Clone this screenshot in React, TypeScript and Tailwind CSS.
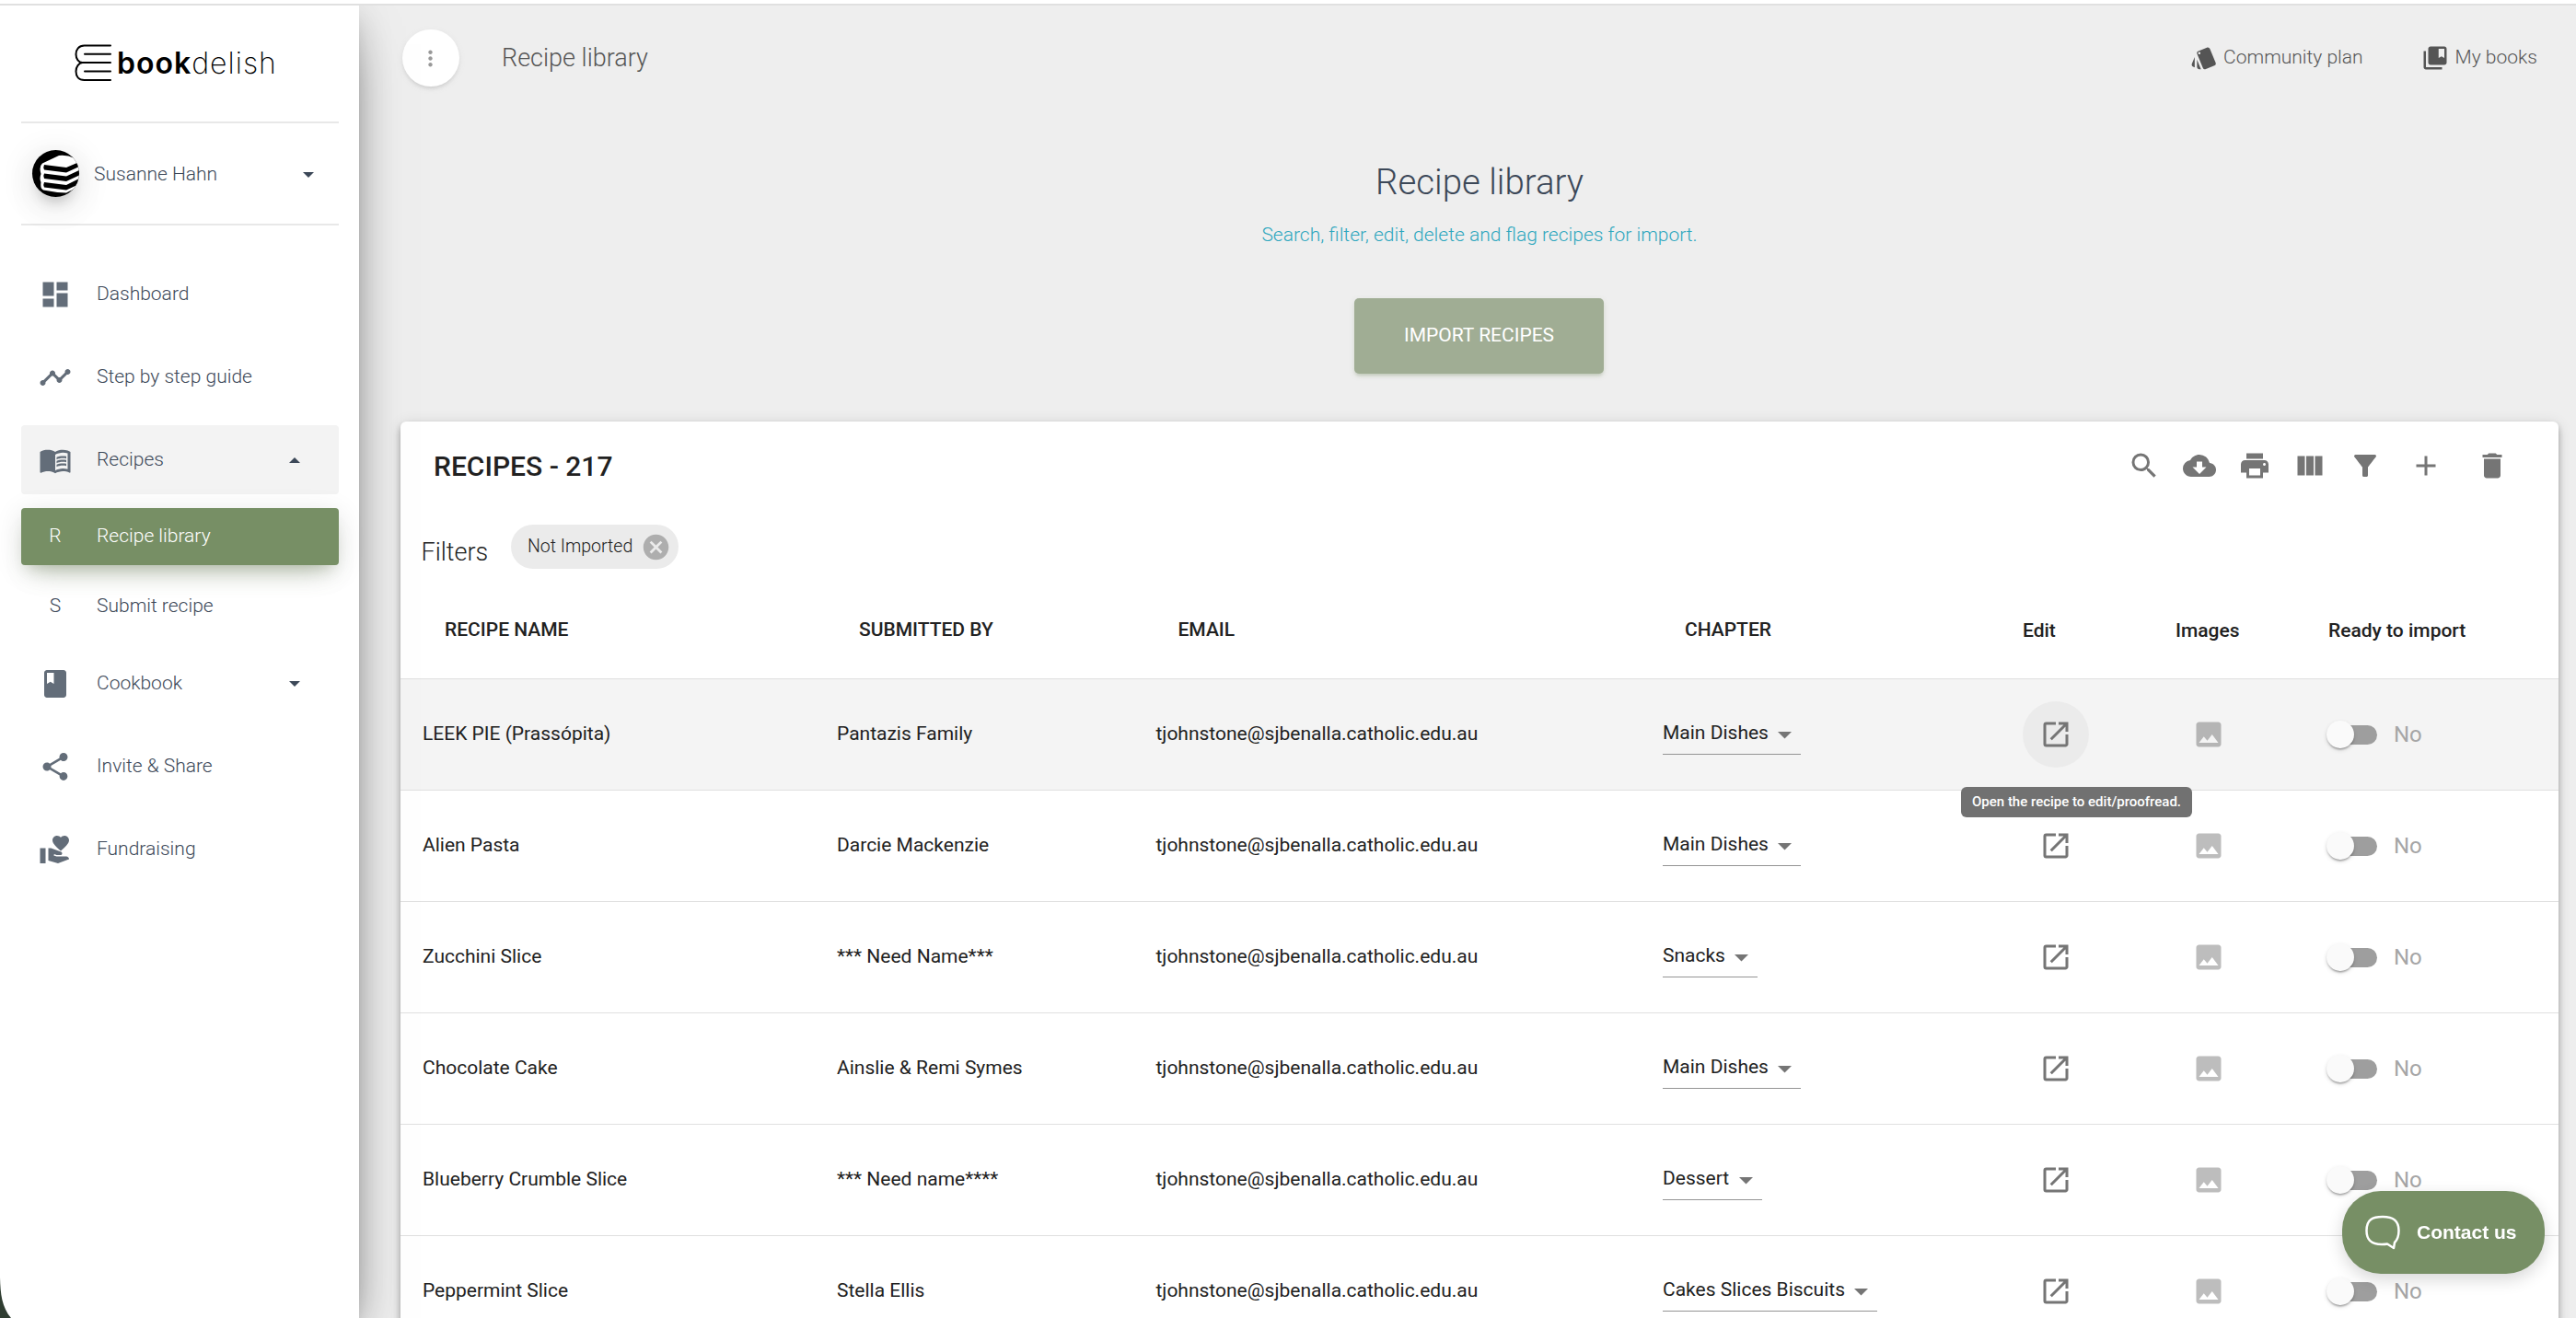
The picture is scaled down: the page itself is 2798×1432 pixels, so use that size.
import type { ReactNode } from "react";
import type { IconType } from "react-icons";
import {
  MdAdd,
  MdCancel,
  MdClass,
  MdCloudDownload,
  MdCollectionsBookmark,
  MdDashboard,
  MdDelete,
  MdFilterAlt,
  MdImage,
  MdMenuBook,
  MdMoreVert,
  MdOpenInNew,
  MdPrint,
  MdSearch,
  MdShare,
  MdStyle,
  MdTimeline,
  MdViewColumn,
  MdVolunteerActivism,
} from "react-icons/md";

const EMAIL = "tjohnstone@sjbenalla.catholic.edu.au";

const recipes = [
  { name: "LEEK PIE (Prassópita)", by: "Pantazis Family", chapter: "Main Dishes", hovered: true },
  { name: "Alien Pasta", by: "Darcie Mackenzie", chapter: "Main Dishes" },
  { name: "Zucchini Slice", by: "*** Need Name***", chapter: "Snacks" },
  { name: "Chocolate Cake", by: "Ainslie & Remi Symes", chapter: "Main Dishes" },
  { name: "Blueberry Crumble Slice", by: "*** Need name****", chapter: "Dessert" },
  { name: "Peppermint Slice", by: "Stella Ellis", chapter: "Cakes Slices Biscuits" },
];

const COLS = "grid grid-cols-[450px_346.5px_550.5px_391px_166px_167px_1fr]";

function Caret({ up = false }: { up?: boolean }) {
  return (
    <svg viewBox="0 0 12 6" className="h-[6px] w-[12px] fill-[#3c4858]">
      <path d={up ? "M0 6L6 0L12 6Z" : "M0 0L6 6L12 0Z"} />
    </svg>
  );
}

function Logo() {
  return (
    <div className="flex h-[126px] items-start pt-[41px] pl-[58px] text-black">
      <svg viewBox="0 0 40 42" className="mt-px h-[42px] w-[40px] fill-none stroke-black stroke-2">
        <path d="M39 1.5H10.5C4.5 1.5 1.5 6 1.5 11C1.5 16 4.5 20 8.5 20H39" strokeLinecap="round" />
        <path d="M8.5 20C4.5 20.5 1.5 24.5 1.5 29.5C1.5 35 4.5 39 10.5 39H39" strokeLinecap="round" />
        <path d="M11 10.7H39M11 29.5H39" strokeLinecap="round" />
      </svg>
      <div className="ml-[6px] flex font-['Inter'] text-[32px] leading-[44px]">
        <span className="font-semibold tracking-[1px]">book</span>
        <span className="font-extralight tracking-[1px]">delish</span>
      </div>
    </div>
  );
}

function Avatar() {
  return (
    <div className="h-[51px] w-[51px] overflow-hidden rounded-full bg-black shadow-[0_15px_45px_-18px_rgba(0,0,0,0.42),0_6px_38px_0_rgba(0,0,0,0.12),0_12px_15px_-8px_rgba(0,0,0,0.2)]">
      <svg viewBox="0 0 51 51" className="h-full w-full">
        <path
          d="M11 14.5L29 6Q38 5 46 9L52 13V39L37 46.5Q24 46 12 43.5Q8.5 42 9.5 35Q7.5 31 9.5 26Q7 18 11 14.5Z"
          fill="#fff"
        />
        <path d="M13 16L37 19L51 13V18L37 24.5L13 21.5Q11.5 19 13 16Z" />
        <path d="M13 25.5L37 28.5L51 22V27.5L37 34L13 31Q11.500 28 13 25.5Z" />
        <path d="M13 35L37 38L51 31V37L37 43.5L13 40.5Q11.5 38 13 35Z" />
      </svg>
    </div>
  );
}

function NavItem({ icon: Icon, label, caret, active }: { icon: IconType; label: string; caret?: "up" | "down"; active?: boolean }) {
  return (
    <div className={`mb-[15px] flex h-[75px] items-center rounded-[4px] pl-[19px] ${active ? "bg-[#f3f3f3]" : ""}`}>
      <Icon className="h-[36px] w-[36px] text-[#636d79]" />
      <span className="mb-[2px] ml-[27px] flex-1">{label}</span>
      {caret && (
        <span className="mr-[42px]">
          <Caret up={caret === "up"} />
        </span>
      )}
    </div>
  );
}

function SubItem({ letter, label, active }: { letter: string; label: string; active?: boolean }) {
  return (
    <div
      className={`mb-[15px] flex h-[61.5px] items-center rounded-[4px] pb-[2px] pl-[19px] ${
        active
          ? "bg-[#778f65] text-white shadow-[0_18px_30px_-15px_rgba(119,143,101,0.4),0_6px_30px_0_rgba(0,0,0,0.12),0_10px_15px_-8px_rgba(119,143,101,0.3)]"
          : ""
      }`}
    >
      <span className="w-[36px] text-center">{letter}</span>
      <span className="ml-[27px]">{label}</span>
    </div>
  );
}

function Sidebar() {
  return (
    <aside className="relative z-10 w-[390px] shrink-0 bg-white px-[23px] text-[21px] leading-[30px] font-light text-[#3c4858] shadow-[0_24px_57px_-18px_rgba(0,0,0,0.56),0_6px_38px_0_rgba(0,0,0,0.12),0_12px_15px_-8px_rgba(0,0,0,0.2)]">
      <div className="w-[345px]">
        <Logo />
        <div className="flex h-[113px] items-center border-y-2 border-[#e8e8e8] pl-[12px]">
          <Avatar />
          <span className="ml-[16px] flex-1">Susanne Hahn</span>
          <span className="mt-[3px] mr-[27px]">
            <Caret />
          </span>
        </div>
        <nav className="pt-[37px]">
          <NavItem icon={MdDashboard} label="Dashboard" />
          <NavItem icon={MdTimeline} label="Step by step guide" />
          <NavItem icon={MdMenuBook} label="Recipes" caret="up" active />
          <SubItem letter="R" label="Recipe library" active />
          <SubItem letter="S" label="Submit recipe" />
          <NavItem icon={MdClass} label="Cookbook" caret="down" />
          <NavItem icon={MdShare} label="Invite & Share" />
          <NavItem icon={MdVolunteerActivism} label="Fundraising" />
        </nav>
      </div>
      {/* rounded window corner */}
      <svg viewBox="0 0 12 44" className="absolute bottom-0 left-0 h-[44px] w-[12px] fill-[#2f3d31]">
        <path d="M0 0C0.500 18 2 32 12 44H0Z" />
      </svg>
    </aside>
  );
}

function TopBar() {
  return (
    <header className="flex h-[114px] items-center pl-[2px] font-light text-[#555555]">
      <button className="flex h-[62px] w-[62px] items-center justify-center rounded-full bg-white pr-px text-[#999999] shadow-[0_3px_3px_0_rgba(153,153,153,0.14),0_4px_3px_-3px_rgba(153,153,153,0.2),0_2px_7px_0_rgba(153,153,153,0.12)]">
        <MdMoreVert className="h-[27px] w-[27px]" />
      </button>
      <h1 className="ml-[46px] flex-1 text-[27px]">Recipe library</h1>
      <a className="flex items-center text-[21px]">
        <MdStyle className="mr-[6px] h-[30px] w-[30px]" />
        Community plan
      </a>
      <a className="mr-[42px] ml-[63px] flex items-center text-[21px]">
        <MdCollectionsBookmark className="mr-[7px] h-[30px] w-[30px]" />
        My books
      </a>
    </header>
  );
}

function Intro() {
  return (
    <section className="flex h-[338px] flex-col items-center pt-[51px] pr-[19px]">
      <h2 className="text-[38.4px] leading-[54px] font-light text-[#3c4858]">Recipe library</h2>
      <p className="mt-[14px] text-[21px] leading-[32px] font-light text-[#2fa7be]">
        Search, filter, edit, delete and flag recipes for import.
      </p>
      <button className="mt-[53px] mr-px h-[82px] w-[271px] rounded-[5px] bg-[#a0ad94] text-[21px] text-white shadow-[0_3px_3px_0_rgba(119,143,101,0.14),0_4px_3px_-3px_rgba(119,143,101,0.2),0_2px_7px_0_rgba(119,143,101,0.12)]">
        IMPORT RECIPES
      </button>
    </section>
  );
}

function Toolbar() {
  return (
    <div className="flex h-[96px] items-center pr-[54px] pl-[36px]">
      <h3 className="flex-1 text-[30px] font-medium">RECIPES - 217</h3>
      <div className="flex items-center gap-[24px] text-[#757575]">
        <MdSearch className="h-[36px] w-[36px]" />
        <MdCloudDownload className="h-[36px] w-[36px]" />
        <MdPrint className="h-[36px] w-[36px]" />
        <MdViewColumn className="h-[36px] w-[36px]" />
        <MdFilterAlt className="h-[36px] w-[36px]" />
        <MdAdd className="ml-[6px] h-[36px] w-[36px]" />
        <MdDelete className="ml-[12px] h-[36px] w-[36px]" />
      </div>
    </div>
  );
}

function Filters() {
  return (
    <div className="flex h-[78px] items-start pt-[16px] pl-[22.5px]">
      <span className="mt-[10px] w-[97.5px] text-[27px] leading-[40px] font-light">Filters</span>
      <span className="flex h-[48px] items-center rounded-full bg-[#ebebeb] pr-[8px] pl-[18px] text-[19.5px] font-light">
        Not Imported
        <MdCancel className="ml-[9px] h-[33px] w-[33px] text-[#aeaeae]" />
      </span>
    </div>
  );
}

function HeadCell({ children, className = "" }: { children: ReactNode; className?: string }) {
  return <div className={`text-[21px] font-medium ${className}`}>{children}</div>;
}

function Toggle() {
  return (
    <div className="flex items-center">
      <div className="relative h-[21px] w-[51px] rounded-full bg-[#9e9e9e]">
        <span className="absolute top-[-5px] left-[-4px] h-[30px] w-[30px] rounded-full bg-[#fafafa] shadow-[0_3px_2px_-2px_rgba(0,0,0,0.2),0_2px_2px_0_rgba(0,0,0,0.14),0_2px_5px_0_rgba(0,0,0,0.12)]" />
      </div>
      <span className="mb-px ml-[18px] text-[24px] leading-[30px] text-[#a6a6a6]">No</span>
    </div>
  );
}

function RecipeRow({ name, by, chapter, hovered }: { name: string; by: string; chapter: string; hovered?: boolean }) {
  return (
    <div className={`${COLS} h-[121px] items-center border-b border-[#e0e0e0] text-[21px] ${hovered ? "bg-[#f4f4f4]" : ""}`}>
      <div className="pl-[24px]">{name}</div>
      <div className="pl-[24px]">{by}</div>
      <div className="pl-[24px]">{EMAIL}</div>
      <div className="flex pl-[24px]">
        <div className="flex h-[44px] items-center border-b border-[#949494] pr-[10px]">
          <span className="mb-px">{chapter}</span>
          <svg viewBox="0 0 15 8" className="mt-[2px] ml-[10.5px] h-[8px] w-[15px] fill-[#757575]">
            <path d="M0 0H15L7.5 7.5Z" />
          </svg>
        </div>
      </div>
      <div className="pl-[24px]">
        <div className={`relative flex h-[72px] w-[72px] items-center justify-center rounded-full ${hovered ? "bg-[#ebebeb]" : ""}`}>
          <MdOpenInNew className="h-[36px] w-[36px] text-[#757575]" />
          {hovered && (
            <span className="absolute top-[93px] left-[-67px] z-10 flex h-[33px] w-[251px] items-center justify-center rounded-[6px] bg-[#717171] text-[15px] font-medium text-white">
              Open the recipe to edit/proofread.
            </span>
          )}
        </div>
      </div>
      <div className="pl-[42px]">
        <MdImage className="h-[36px] w-[36px] text-black/26" />
      </div>
      <div className="pl-[25px]">
        <Toggle />
      </div>
    </div>
  );
}

function RecipeTable() {
  return (
    <section className="w-[2344px] rounded-[6px] bg-white text-[#212121] shadow-[0_3px_6px_-1px_rgba(0,0,0,0.2),0_6px_8px_0_rgba(0,0,0,0.14),0_2px_15px_0_rgba(0,0,0,0.12)]">
      <Toolbar />
      <Filters />
      <div className={`${COLS} h-[106px] items-center border-b border-[#e0e0e0]`}>
        <HeadCell className="pl-[48px]">RECIPE NAME</HeadCell>
        <HeadCell className="pl-[48px]">SUBMITTED BY</HeadCell>
        <HeadCell className="pl-[48px]">EMAIL</HeadCell>
        <HeadCell className="pl-[48px]">CHAPTER</HeadCell>
        <HeadCell className="pt-[2px] pl-[24px]">Edit</HeadCell>
        <HeadCell className="pt-[2px] pl-[24px]">Images</HeadCell>
        <HeadCell className="pt-[2px] pl-[23px]">Ready to import</HeadCell>
      </div>
      {recipes.map((recipe) => (
        <RecipeRow key={recipe.name} {...recipe} />
      ))}
    </section>
  );
}

function ContactButton() {
  return (
    <button className="fixed right-[34px] bottom-[48px] z-20 flex h-[90px] w-[220px] items-center rounded-[42px] bg-[#778f65] pl-[25px] font-['Liberation_Sans'] text-[21px] font-bold text-white shadow-[0_6px_18px_0_rgba(0,0,0,0.16)]">
      <svg viewBox="0 0 38 38" className="h-[38px] w-[38px] fill-none stroke-white stroke-[2.5]">
        <path
          d="M19 2C29 2 36.5 5 36.5 17C36.5 24 35 27 32 30L31 36L24 31.5C22 32 20 32 18 32C6 32 1.5 27 1.5 17C1.5 5 8 2 19 2Z"
          strokeLinejoin="round"
        />
      </svg>
      <span className="ml-[18px]">Contact us</span>
    </button>
  );
}

export default function App() {
  return (
    <div className="flex h-[1432px] w-[2798px] flex-col overflow-hidden bg-white font-['Roboto',sans-serif]">
      <div className="h-[6px] shrink-0 border-b-2 border-[#e0e0e0]" />
      <div className="flex min-h-0 flex-1 overflow-hidden">
        <Sidebar />
        <main className="min-w-0 flex-1 bg-[#eeeeee] pl-[45px]">
          <TopBar />
          <Intro />
          <RecipeTable />
        </main>
      </div>
      <ContactButton />
    </div>
  );
}
